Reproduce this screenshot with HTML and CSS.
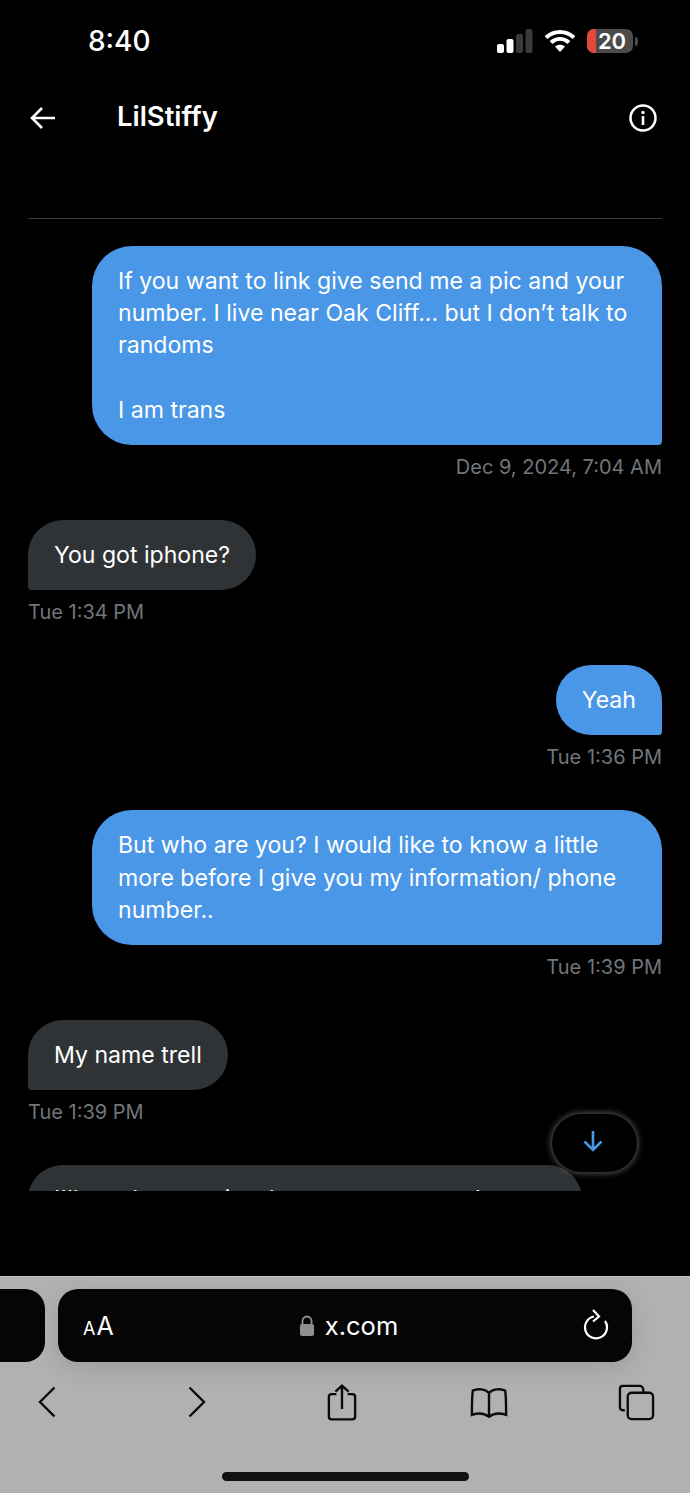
FILE: index.html
```html
<!DOCTYPE html>
<html lang="en">
<head>
<meta charset="utf-8">
<title>LilStiffy</title>
<link rel="stylesheet" href="styles.css">
</head>
<body>
<div class="phone">
  <main class="page">
    <div class="status">
      <span class="clock">8:40</span>
      <div class="status-icons">
        <svg class="signal" width="36" height="24" viewBox="0 0 36 24">
          <rect x="0" y="15" width="7" height="9" rx="2" fill="#fff"/>
          <rect x="9.500" y="10" width="7" height="14" rx="2" fill="#fff"/>
          <rect x="19" y="5" width="7" height="19" rx="2" fill="#3a3a3a"/>
          <rect x="28.500" y="0" width="7" height="24" rx="2" fill="#3a3a3a"/>
        </svg>
        <svg class="wifi" width="32" height="24" viewBox="0 0 32 24">
          <path d="M2 8.500C10 1 22 1 30 8.500M7 13.500c5.500-4.800 12.500-4.800 18 0" fill="none" stroke="#fff" stroke-width="4"/>
          <path d="M11 17.500c3-2.500 7-2.500 10 0l-5 5.500z" fill="#fff"/>
        </svg>
        <div class="battery">
          <div class="battery-body"><span class="battery-level"></span><span class="battery-num">20</span></div>
          <span class="battery-nub"></span>
        </div>
      </div>
    </div>
    <header class="header">
      <svg width="28" height="28" viewBox="0 0 28 28" fill="none" stroke="#fff" stroke-width="2.600">
        <path d="M3 14h23M13 4 3 14l10 10"/>
      </svg>
      <h1 class="title">LilStiffy</h1>
      <svg class="info" width="30" height="30" viewBox="0 0 30 30" fill="none">
        <circle cx="15" cy="15" r="12.500" stroke="#fff" stroke-width="2.500"/>
        <rect x="13.700" y="13" width="2.600" height="9" fill="#fff"/>
        <circle cx="15" cy="9.500" r="1.700" fill="#fff"/>
      </svg>
    </header>
    <section class="thread">
      <div class="msg out">
        <p class="bubble">If you want to link give send me a pic and your number. I live near Oak Cliff... but I don’t talk to randoms<br><br>I am trans</p>
        <time class="stamp">Dec 9, 2024, 7:04 AM</time>
      </div>
      <div class="msg in">
        <p class="bubble">You got iphone?</p>
        <time class="stamp">Tue 1:34 PM</time>
      </div>
      <div class="msg out">
        <p class="bubble">Yeah</p>
        <time class="stamp">Tue 1:36 PM</time>
      </div>
      <div class="msg out">
        <p class="bubble">But who are you? I would like to know a little more before I give you my information/ phone number..</p>
        <time class="stamp">Tue 1:39 PM</time>
      </div>
      <div class="msg in">
        <p class="bubble">My name trell</p>
        <time class="stamp">Tue 1:39 PM</time>
      </div>
      <div class="msg in">
        <p class="bubble clipped">I'll send you a pic when you are around me soon</p>
      </div>
    </section>
    <button class="jump" type="button" aria-label="Scroll to bottom">
      <svg width="24" height="24" viewBox="0 0 24 24" fill="none" stroke="#4a97e8" stroke-width="2.600">
        <path d="M12 2v19M3.500 12.500 12 21l8.500-8.500"/>
      </svg>
    </button>
  </main>
  <footer class="browser">
    <div class="tabs">
      <div class="tab-prev"></div>
      <div class="urlbar">
        <span class="aa"><small>A</small>A</span>
        <span class="site">
          <svg width="16" height="24" viewBox="0 0 16 24">
            <path d="M3.500 11V7a4.500 4.500 0 0 1 9 0v4" fill="none" stroke="#8e8e93" stroke-width="1.800"/>
            <rect x="1" y="10" width="14" height="12" rx="2" fill="#8e8e93"/>
          </svg>
          x.com
        </span>
        <svg width="28" height="36" viewBox="0 0 28 36" fill="none" stroke="#fff" stroke-width="2.200">
          <path d="M11 8.500A11 11 0 1 0 22 13"/>
          <path d="m10 2 6 6.500-6 5"/>
        </svg>
      </div>
    </div>
    <nav class="tools">
      <svg width="18" height="32" viewBox="0 0 18 32" fill="none" stroke="#0a0a0a" stroke-width="2.400"><path d="M16.500 1.500 2 16l14.500 14.500"/></svg>
      <svg width="18" height="32" viewBox="0 0 18 32" fill="none" stroke="#0a0a0a" stroke-width="2.400"><path d="M1.500 1.500 16 16 1.500 30.500"/></svg>
      <svg width="30" height="39" viewBox="0 0 32 40" fill="none" stroke="#0a0a0a" stroke-width="2.500"><path d="M10 11H5a3 3 0 0 0-3 3v21a3 3 0 0 0 3 3h22a3 3 0 0 0 3-3V14a3 3 0 0 0-3-3h-5M16 27V2M9 8.500 16 2l7 6.500"/></svg>
      <svg width="38" height="31" viewBox="0 0 40 32" fill="none" stroke="#0a0a0a" stroke-width="2.500"><path d="M20 6C16 1.500 8 1 3 3.500 2 9 2 22 2 29c6-2 13-2 18 2 5-4 12-4 18-2 0-7 0-20-1-25.500C32 1 24 1.500 20 6zM20 6v24"/></svg>
      <svg width="37" height="37" viewBox="0 0 38 38" fill="none" stroke="#0a0a0a" stroke-width="2.400"><path d="M7 27H5a3 3 0 0 1-3-3V5a3 3 0 0 1 3-3h17a4 4 0 0 1 4 4v3"/><rect x="10" y="9" width="26" height="27" rx="4"/></svg>
    </nav>
    <div class="home-bar"></div>
  </footer>
</div>
</body>
</html>
```
FILE: styles.css
```css
* { box-sizing: border-box; }
html, body { margin: 0; padding: 0; background: #000; }
.phone {
  width: 690px;
  height: 1493px;
  display: flex;
  flex-direction: column;
  overflow: hidden;
  font-family: Inter, "Liberation Sans", sans-serif;
  color: #fff;
}
.page {
  position: relative;
  height: 1276px;
  background: #000;
  flex: none;
}
.status {
  height: 82px;
  display: flex;
  align-items: center;
  justify-content: space-between;
  padding: 0 52px 0 88px;
}
.clock { font-size: 28px; font-weight: 500; }
.status-icons { display: flex; align-items: center; gap: 11px; }
.battery { display: flex; align-items: center; gap: 2px; }
.battery-body {
  position: relative;
  width: 46px;
  height: 24px;
  border-radius: 7px;
  background: #4b4b4b;
  display: flex;
  align-items: center;
  justify-content: center;
}
.battery-level {
  position: absolute;
  left: 0;
  top: 0;
  bottom: 0;
  width: 9px;
  border-radius: 7px 0 0 7px;
  background: #e5483a;
}
.battery-num { position: relative; font-size: 22px; line-height: 24px; font-weight: 600; left: 2px; }
.battery-nub { width: 3px; height: 9px; border-radius: 0 3px 3px 0; background: #4b4b4b; }
.header {
  height: 72px;
  display: flex;
  align-items: center;
  padding: 0 32px 0 29px;
}
.title { margin: 0 0 4px 60px; font-size: 27.400px; font-weight: 600; flex: 1; }
.thread {
  margin: 64px 28px 0;
  height: 973px;
  border-top: 1px solid #3a3d40;
  padding-top: 27px;
  overflow: hidden;
}
.msg { display: flex; flex-direction: column; margin-bottom: 31px; }
.msg.out { align-items: flex-end; }
.msg.in { align-items: flex-start; }
.bubble {
  margin: 0;
  padding: 19px 26px;
  font-size: 23.100px;
  line-height: 32.200px;
  border-radius: 40px;
}
.out .bubble { background: #4a97e8; border-bottom-right-radius: 4px; max-width: 570px; }
.in .bubble { background: #2f3336; border-bottom-left-radius: 4px; }
.clipped { width: 554px; padding-top: 18px; white-space: nowrap; }
.stamp { font-size: 20px; line-height: 24px; margin-top: 10px; margin-bottom: 10px; color: #71767b; }
.jump {
  position: absolute;
  left: 552px;
  top: 1114px;
  width: 85px;
  height: 58px;
  padding: 0 3px 4px 0;
  border: none;
  border-radius: 29px;
  background: #000;
  box-shadow: 0 0 6px 1px rgba(255, 255, 255, 0.35);
  display: flex;
  align-items: center;
  justify-content: center;
}
.browser {
  flex: 1;
  display: flex;
  flex-direction: column;
  background: #b1b1b1;
  border-top: 1px solid #c4c4c4;
}
.tabs { display: flex; gap: 13px; margin: 12px 0 0 -20px; }
.tab-prev { width: 65px; height: 73px; background: #050505; border-radius: 20px; }
.urlbar {
  width: 574px;
  height: 73px;
  border-radius: 20px;
  background: #050505;
  display: flex;
  align-items: center;
  justify-content: space-between;
  padding: 0 21px 0 25px;
  box-shadow: 0 6px 24px rgba(0, 0, 0, 0.12);
}
.aa { font-size: 25px; width: 31px; white-space: nowrap; }
.aa small { font-size: 18px; margin-right: 1px; }
.site { display: flex; align-items: center; gap: 10px; font-size: 25.500px; }
.tools {
  display: grid;
  grid-template-columns: 150px 139px 143px 148px auto;
  align-items: center;
  margin: 14px 0 0 38px;
  height: 52px;
}
.home-bar {
  width: 247px;
  height: 9px;
  border-radius: 5px;
  background: #111;
  margin: 44px 0 0 222px;
}
```
